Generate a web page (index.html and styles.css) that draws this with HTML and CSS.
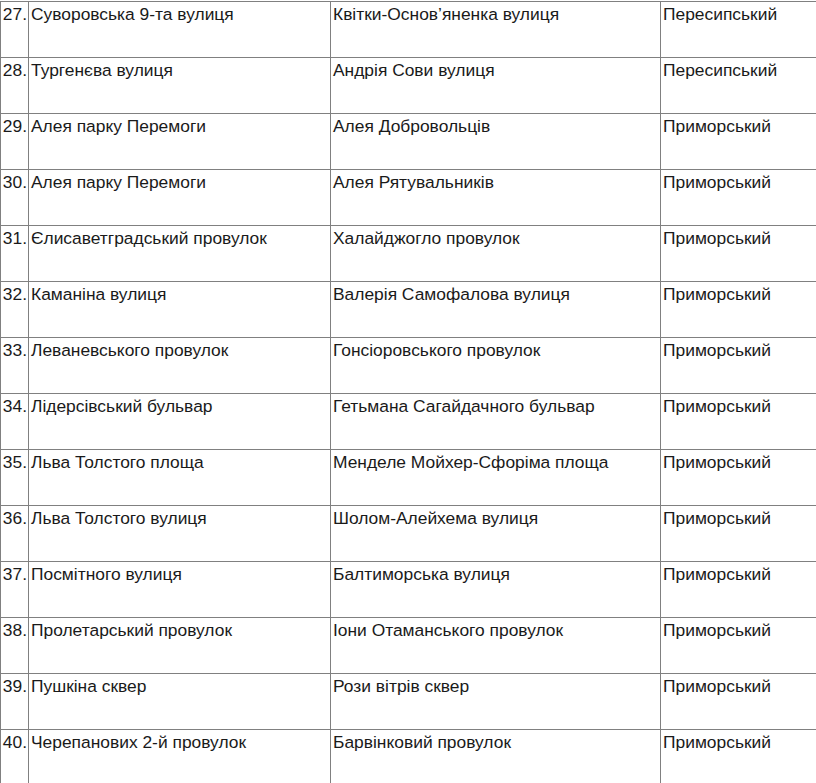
FILE: index.html
```html
<!DOCTYPE html>
<html lang="uk">
<head>
<meta charset="utf-8">
<title>Перейменування вулиць</title>
<link rel="stylesheet" href="styles.css">
</head>
<body>
<table class="streets">
<colgroup>
<col class="c-num"><col class="c-old"><col class="c-new"><col class="c-dist">
</colgroup>
<tbody>
<tr><td class="num">27.</td><td>Суворовська 9-та вулиця</td><td>Квітки-Основ’яненка вулиця</td><td>Пересипський</td></tr>
<tr><td class="num">28.</td><td>Тургенєва вулиця</td><td>Андрія Сови вулиця</td><td>Пересипський</td></tr>
<tr><td class="num">29.</td><td>Алея парку Перемоги</td><td>Алея Добровольців</td><td>Приморський</td></tr>
<tr><td class="num">30.</td><td>Алея парку Перемоги</td><td>Алея Рятувальників</td><td>Приморський</td></tr>
<tr><td class="num">31.</td><td>Єлисаветградський провулок</td><td>Халайджогло провулок</td><td>Приморський</td></tr>
<tr><td class="num">32.</td><td>Каманіна вулиця</td><td>Валерія Самофалова вулиця</td><td>Приморський</td></tr>
<tr><td class="num">33.</td><td>Леваневського провулок</td><td>Гонсіоровського провулок</td><td>Приморський</td></tr>
<tr><td class="num">34.</td><td>Лідерсівський бульвар</td><td>Гетьмана Сагайдачного бульвар</td><td>Приморський</td></tr>
<tr><td class="num">35.</td><td>Льва Толстого площа</td><td>Менделе Мойхер-Сфоріма площа</td><td>Приморський</td></tr>
<tr><td class="num">36.</td><td>Льва Толстого вулиця</td><td>Шолом-Алейхема вулиця</td><td>Приморський</td></tr>
<tr><td class="num">37.</td><td>Посмітного вулиця</td><td>Балтиморська вулиця</td><td>Приморський</td></tr>
<tr><td class="num">38.</td><td>Пролетарський провулок</td><td>Іони Отаманського провулок</td><td>Приморський</td></tr>
<tr><td class="num">39.</td><td>Пушкіна сквер</td><td>Рози вітрів сквер</td><td>Приморський</td></tr>
<tr><td class="num">40.</td><td>Черепанових 2-й провулок</td><td>Барвінковий провулок</td><td>Приморський</td></tr>
</tbody>
</table>
</body>
</html>
```
FILE: styles.css
```css
html, body {
  margin: 0;
  padding: 0;
  background: #ffffff;
  overflow: hidden;
}
body {
  padding-top: 1px;
  font-family: "Liberation Sans", Arial, sans-serif;
  font-size: 17.4px;
  color: #1a1a1a;
}
.streets {
  border-collapse: collapse;
  table-layout: fixed;
  width: 816px;
}
.c-num { width: 28px; }
.c-old { width: 302px; }
.c-new { width: 330px; }
.c-dist { width: 156px; }
.streets td {
  border: 1px solid #808080;
  height: 56px;
  box-sizing: border-box;
  vertical-align: top;
  padding: 2px 2px 0 2px;
  line-height: 20px;
  white-space: nowrap;
  overflow: hidden;
}
.streets td:last-child {
  border-right: none;
}
.streets td.num {
  text-align: right;
  padding-right: 1px;
  padding-left: 0;
  overflow: visible;
}
```
